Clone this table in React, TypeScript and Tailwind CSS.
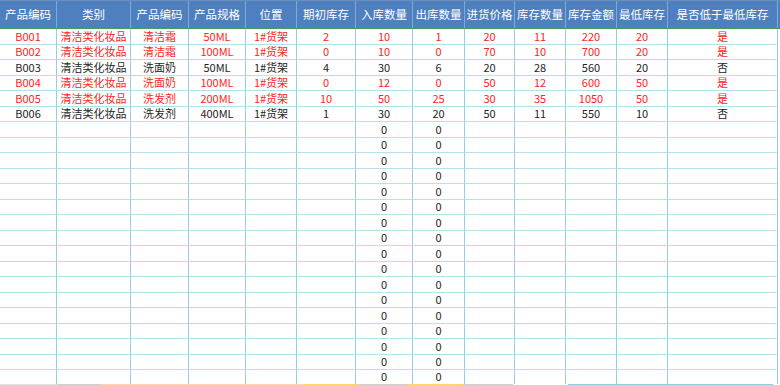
const cols = [
  "w-[57px]",
  "w-[74px]",
  "w-[58px]",
  "w-[57px]",
  "w-[51px]",
  "w-[59px]",
  "w-[57px]",
  "w-[52px]",
  "w-[50px]",
  "w-[51px]",
  "w-[51px]",
  "w-[51px]",
  "w-[110px]",
];

const headers = [
  "产品编码",
  "类别",
  "产品编码",
  "产品规格",
  "位置",
  "期初库存",
  "入库数量",
  "出库数量",
  "进货价格",
  "库存数量",
  "库存金额",
  "最低库存",
  "是否低于最低库存",
];

const rows: { red: boolean; cells: string[] }[] = [
  { red: true, cells: ["B001", "清洁类化妆品", "清洁霜", "50ML", "1#货架", "2", "10", "1", "20", "11", "220", "20", "是"] },
  { red: true, cells: ["B002", "清洁类化妆品", "清洁霜", "100ML", "1#货架", "0", "10", "0", "70", "10", "700", "20", "是"] },
  { red: false, cells: ["B003", "清洁类化妆品", "洗面奶", "50ML", "1#货架", "4", "30", "6", "20", "28", "560", "20", "否"] },
  { red: true, cells: ["B004", "清洁类化妆品", "洗面奶", "100ML", "1#货架", "0", "12", "0", "50", "12", "600", "50", "是"] },
  { red: true, cells: ["B005", "清洁类化妆品", "洗发剂", "200ML", "1#货架", "10", "50", "25", "30", "35", "1050", "50", "是"] },
  { red: false, cells: ["B006", "清洁类化妆品", "洗发剂", "400ML", "1#货架", "1", "30", "20", "50", "11", "550", "10", "否"] },
];

const empty = Array.from({ length: 17 }, () => ({
  red: false,
  cells: ["", "", "", "", "", "", "0", "0", "", "", "", "", ""],
}));

export default function App() {
  const all = [...rows, ...empty];

  return (
    <div className="w-[780px] h-[385px] overflow-hidden bg-white font-['Noto_Sans_CJK_SC','Noto_Sans',sans-serif]">
      {/* header */}
      <div className="flex h-[29px] bg-[#4e7fbe] border-t border-t-[#6d8fbf] border-b border-b-[#4c9a52]">
        {headers.map((h, i) => (
          <div
            key={i}
            className={`${cols[i]} shrink-0 flex items-center justify-center border-r border-r-[#86a8d6] text-[11.5px] text-white whitespace-nowrap`}
          >
            {h}
          </div>
        ))}
      </div>

      {/* body */}
      {all.map((r, ri) => {
        const last = ri === all.length - 1;
        return (
          <div key={ri} className={`flex ${last ? "h-[13.5px]" : "h-[15.5px]"}`}>
            {r.cells.map((c, ci) => (
              <div
                key={ci}
                className={`${cols[ci]} shrink-0 flex items-center justify-center border-r border-r-[#96cfe0] ${
                  last ? "" : "border-b border-b-[#b5e0ec]"
                } text-[11px] leading-none whitespace-nowrap ${
                  r.red ? "text-[#ff2323]" : "text-[#1e1e1e]"
                }`}
              >
                {c}
              </div>
            ))}
          </div>
        );
      })}

      {/* next row's fills peeking in */}
      <div className="flex h-[2px]">
        <div className="w-[57px] bg-[#e4e4e4]" />
        <div className="w-[43px] bg-[#cfcfcf]" />
        <div className="w-[203px] bg-[#fcd5b4]" />
        <div className="w-[55px] bg-[#ffd966]" />
        <div className="w-[49px] bg-[#cfcfcf]" />
        <div className="w-[56px] bg-[#ffd966]" />
        <div className="w-[50px] bg-[#cfcfcf]" />
        <div className="w-[55px] bg-white" />
        <div className="w-[205px] bg-[#92cddc]" />
      </div>
    </div>
  );
}
